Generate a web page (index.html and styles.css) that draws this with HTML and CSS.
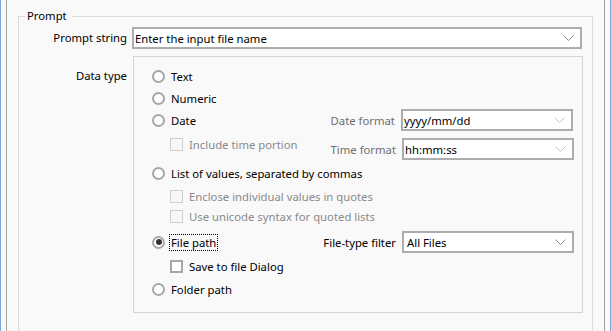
FILE: index.html
```html
<!DOCTYPE html>
<html lang="en">
<head>
  <meta charset="UTF-8" />
  <title>Prompt</title>
  <link rel="stylesheet" href="styles.css">
</head>
<body>
  <div class="window">
    <div class="pane">
      <fieldset class="group">
        <legend>Prompt</legend>

        <div class="field-row">
          <div class="field-label">Prompt string</div>
          <div class="combo combo-wide">
            <span>Enter the input file name</span>
            <svg class="chevron" width="11" height="6" viewBox="0 0 11 6"><polyline points="0.5,0.5 5.5,5.5 10.5,0.5" /></svg>
          </div>
        </div>

        <div class="field-row">
          <div class="field-label label-top">Data type</div>
          <div class="panel">
            <div class="option"><span class="radio"></span>Text</div>
            <div class="option"><span class="radio"></span>Numeric</div>

            <div class="option-group">
              <div class="group-left">
                <div class="option"><span class="radio"></span>Date</div>
                <div class="option sub sub-first disabled"><span class="check"></span>Include time portion</div>
              </div>
              <div class="group-right">
                <div class="format-row disabled">
                  <span class="format-label">Date format</span>
                  <div class="combo combo-small">
                    <span>yyyy/mm/dd</span>
                    <svg class="chevron" width="11" height="6" viewBox="0 0 11 6"><polyline points="0.5,0.5 5.5,5.5 10.5,0.5" /></svg>
                  </div>
                </div>
                <div class="format-row disabled">
                  <span class="format-label">Time format</span>
                  <div class="combo combo-small">
                    <span>hh:mm:ss</span>
                    <svg class="chevron" width="11" height="6" viewBox="0 0 11 6"><polyline points="0.5,0.5 5.5,5.5 10.5,0.5" /></svg>
                  </div>
                </div>
              </div>
            </div>

            <div class="option option-list"><span class="radio"></span>List of values, separated by commas</div>
            <div class="option sub short sub-first disabled"><span class="check"></span>Enclose individual values in quotes</div>
            <div class="option sub short disabled"><span class="check"></span>Use unicode syntax for quoted lists</div>

            <div class="option-group group-file">
              <div class="group-left">
                <div class="option"><span class="radio checked"></span><span class="focus">File path</span></div>
                <div class="option sub sub-first"><span class="check"></span>Save to file Dialog</div>
              </div>
              <div class="group-right">
                <div class="format-row">
                  <span class="format-label">File-type filter</span>
                  <div class="combo combo-small combo-filter">
                    <span>All Files</span>
                    <svg class="chevron" width="11" height="6" viewBox="0 0 11 6"><polyline points="0.5,0.5 5.5,5.5 10.5,0.5" /></svg>
                  </div>
                </div>
              </div>
            </div>

            <div class="option option-last"><span class="radio"></span>Folder path</div>
          </div>
        </div>
      </fieldset>
    </div>
  </div>
</body>
</html>
```

FILE: styles.css
```css
* {
  box-sizing: border-box;
}

body {
  margin: 0;
  font-family: "Noto Sans", "Open Sans", sans-serif;
  font-size: 11.3px;
  color: #000;
  background: #f9f9f9;
}

.window {
  width: 611px;
  height: 331px;
  overflow: hidden;
  padding: 0 5px;
  border-left: 1px solid #7ea6da;
  border-right: 1px solid #7ea6da;
}

.pane {
  height: 100%;
  padding: 8px 11px 0;
  border-left: 1px solid #a0a0a0;
  border-right: 1px solid #a0a0a0;
}

.group {
  margin: 0;
  padding: 3px 0 0;
  min-width: 0;
  height: 400px;
  border: 1px solid #dcdcdc;
}

.group legend {
  margin-left: 7px;
  padding: 0 5px 0 1px;
  line-height: 16px;
}

.field-row {
  display: flex;
}

.field-label {
  width: 108px;
  margin-right: 5px;
  text-align: right;
  line-height: 22px;
  white-space: nowrap;
}

.label-top {
  align-self: flex-start;
  margin-top: 16px;
}

.combo {
  display: flex;
  align-items: center;
  justify-content: space-between;
  height: 22px;
  padding: 0 6px 0 1px;
  background: #fff;
  border: 2px solid #adadad;
  white-space: nowrap;
}

.combo-wide {
  width: 450px;
}

.combo-small {
  width: 172px;
}

.combo-filter {
  padding-left: 3px;
}

.chevron polyline {
  fill: none;
  stroke: #8a8a8a;
  stroke-width: 1;
}

.disabled .chevron polyline {
  stroke: #c4c4c4;
}

.panel {
  width: 450px;
  height: 257px;
  margin: 7px 0 0 1px;
  padding: 8px 8px 0 18px;
  border: 1px solid #d5d5d5;
}

.option {
  display: flex;
  align-items: center;
  gap: 6px;
  height: 22px;
  white-space: nowrap;
}

.option.short {
  height: 20px;
}

.sub {
  margin-left: 18px;
}

.sub-first {
  margin-top: 2px;
}

.option-list {
  margin-top: 2px;
}

.option-last {
  margin-top: 1px;
}

.disabled {
  color: #8a8a8a;
}

.radio {
  flex: none;
  width: 13px;
  height: 13px;
  background: #fff;
  border: 2px solid #a6a6a6;
  border-radius: 50%;
  position: relative;
}

.radio.checked::after {
  content: "";
  position: absolute;
  left: 1.5px;
  top: 1.5px;
  width: 6px;
  height: 6px;
  background: #333;
  border-radius: 50%;
}

.check {
  flex: none;
  width: 13px;
  height: 13px;
  background: #fff;
  border: 2px solid #a6a6a6;
}

.disabled .check {
  background: #f7f7f7;
  border: 1px solid #cfcfcf;
}

.focus {
  margin-left: -2px;
  padding: 0 1px;
  line-height: 15px;
  border: 1px dotted #000;
}

.option-group {
  display: flex;
  justify-content: space-between;
}

.group-file {
  margin-top: 5px;
}

.group-right {
  display: flex;
  flex-direction: column;
  gap: 7px;
}

.format-row {
  display: flex;
  align-items: center;
}

.format-row .combo {
  color: #000;
}

.format-label {
  margin-right: 6px;
  white-space: nowrap;
}

.format-row.disabled .format-label {
  color: #6f6f6f;
}
```
